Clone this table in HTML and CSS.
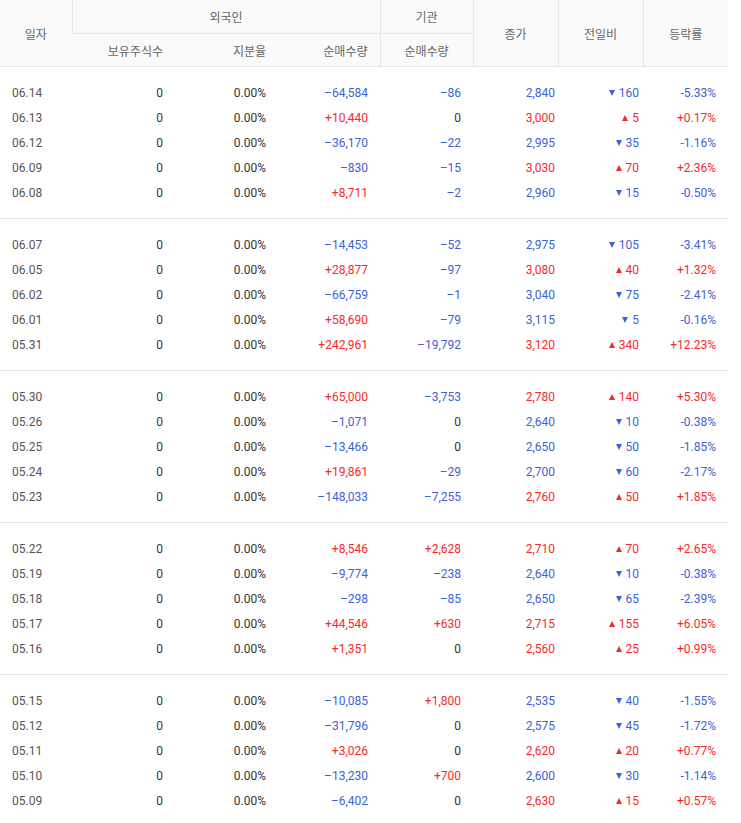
FILE: index.html
```html
<!DOCTYPE html>
<html lang="ko">
<head>
<meta charset="utf-8">
<link rel="stylesheet" href="styles.css">
</head>
<body>
<table class="tbl">
  <colgroup>
    <col class="c-date"><col class="c-hold"><col class="c-ratio"><col class="c-fnet"><col class="c-inet"><col class="c-close"><col class="c-chg"><col class="c-rate">
  </colgroup>
  <thead>
    <tr class="h1">
      <th rowspan="2" class="bl-none">일자</th>
      <th colspan="3">외국인</th>
      <th>기관</th>
      <th rowspan="2">종가</th>
      <th rowspan="2">전일비</th>
      <th rowspan="2">등락률</th>
    </tr>
    <tr class="h2">
      <th class="r">보유주식수</th>
      <th class="r bl-none">지분율</th>
      <th class="r bl-none">순매수량</th>
      <th>순매수량</th>
    </tr>
  </thead>
  <tbody>
    <tr><td class="d">06.14</td><td>0</td><td>0.00%</td><td class="dn">–64,584</td><td class="dn">–86</td><td class="dn cl">2,840</td><td class="dn cg"><i class="down"></i>160</td><td class="dn">-5.33%</td></tr>
    <tr><td class="d">06.13</td><td>0</td><td>0.00%</td><td class="up">+10,440</td><td>0</td><td class="up cl">3,000</td><td class="up cg"><i class="upa"></i>5</td><td class="up">+0.17%</td></tr>
    <tr><td class="d">06.12</td><td>0</td><td>0.00%</td><td class="dn">–36,170</td><td class="dn">–22</td><td class="dn cl">2,995</td><td class="dn cg"><i class="down"></i>35</td><td class="dn">-1.16%</td></tr>
    <tr><td class="d">06.09</td><td>0</td><td>0.00%</td><td class="dn">–830</td><td class="dn">–15</td><td class="up cl">3,030</td><td class="up cg"><i class="upa"></i>70</td><td class="up">+2.36%</td></tr>
    <tr><td class="d">06.08</td><td>0</td><td>0.00%</td><td class="up">+8,711</td><td class="dn">–2</td><td class="dn cl">2,960</td><td class="dn cg"><i class="down"></i>15</td><td class="dn">-0.50%</td></tr>
  </tbody>
  <tbody>
    <tr><td class="d">06.07</td><td>0</td><td>0.00%</td><td class="dn">–14,453</td><td class="dn">–52</td><td class="dn cl">2,975</td><td class="dn cg"><i class="down"></i>105</td><td class="dn">-3.41%</td></tr>
    <tr><td class="d">06.05</td><td>0</td><td>0.00%</td><td class="up">+28,877</td><td class="dn">–97</td><td class="up cl">3,080</td><td class="up cg"><i class="upa"></i>40</td><td class="up">+1.32%</td></tr>
    <tr><td class="d">06.02</td><td>0</td><td>0.00%</td><td class="dn">–66,759</td><td class="dn">–1</td><td class="dn cl">3,040</td><td class="dn cg"><i class="down"></i>75</td><td class="dn">-2.41%</td></tr>
    <tr><td class="d">06.01</td><td>0</td><td>0.00%</td><td class="up">+58,690</td><td class="dn">–79</td><td class="dn cl">3,115</td><td class="dn cg"><i class="down"></i>5</td><td class="dn">-0.16%</td></tr>
    <tr><td class="d">05.31</td><td>0</td><td>0.00%</td><td class="up">+242,961</td><td class="dn">–19,792</td><td class="up cl">3,120</td><td class="up cg"><i class="upa"></i>340</td><td class="up">+12.23%</td></tr>
  </tbody>
  <tbody>
    <tr><td class="d">05.30</td><td>0</td><td>0.00%</td><td class="up">+65,000</td><td class="dn">–3,753</td><td class="up cl">2,780</td><td class="up cg"><i class="upa"></i>140</td><td class="up">+5.30%</td></tr>
    <tr><td class="d">05.26</td><td>0</td><td>0.00%</td><td class="dn">–1,071</td><td>0</td><td class="dn cl">2,640</td><td class="dn cg"><i class="down"></i>10</td><td class="dn">-0.38%</td></tr>
    <tr><td class="d">05.25</td><td>0</td><td>0.00%</td><td class="dn">–13,466</td><td>0</td><td class="dn cl">2,650</td><td class="dn cg"><i class="down"></i>50</td><td class="dn">-1.85%</td></tr>
    <tr><td class="d">05.24</td><td>0</td><td>0.00%</td><td class="up">+19,861</td><td class="dn">–29</td><td class="dn cl">2,700</td><td class="dn cg"><i class="down"></i>60</td><td class="dn">-2.17%</td></tr>
    <tr><td class="d">05.23</td><td>0</td><td>0.00%</td><td class="dn">–148,033</td><td class="dn">–7,255</td><td class="up cl">2,760</td><td class="up cg"><i class="upa"></i>50</td><td class="up">+1.85%</td></tr>
  </tbody>
  <tbody>
    <tr><td class="d">05.22</td><td>0</td><td>0.00%</td><td class="up">+8,546</td><td class="up">+2,628</td><td class="up cl">2,710</td><td class="up cg"><i class="upa"></i>70</td><td class="up">+2.65%</td></tr>
    <tr><td class="d">05.19</td><td>0</td><td>0.00%</td><td class="dn">–9,774</td><td class="dn">–238</td><td class="dn cl">2,640</td><td class="dn cg"><i class="down"></i>10</td><td class="dn">-0.38%</td></tr>
    <tr><td class="d">05.18</td><td>0</td><td>0.00%</td><td class="dn">–298</td><td class="dn">–85</td><td class="dn cl">2,650</td><td class="dn cg"><i class="down"></i>65</td><td class="dn">-2.39%</td></tr>
    <tr><td class="d">05.17</td><td>0</td><td>0.00%</td><td class="up">+44,546</td><td class="up">+630</td><td class="up cl">2,715</td><td class="up cg"><i class="upa"></i>155</td><td class="up">+6.05%</td></tr>
    <tr><td class="d">05.16</td><td>0</td><td>0.00%</td><td class="up">+1,351</td><td>0</td><td class="up cl">2,560</td><td class="up cg"><i class="upa"></i>25</td><td class="up">+0.99%</td></tr>
  </tbody>
  <tbody class="last">
    <tr><td class="d">05.15</td><td>0</td><td>0.00%</td><td class="dn">–10,085</td><td class="up">+1,800</td><td class="dn cl">2,535</td><td class="dn cg"><i class="down"></i>40</td><td class="dn">-1.55%</td></tr>
    <tr><td class="d">05.12</td><td>0</td><td>0.00%</td><td class="dn">–31,796</td><td>0</td><td class="dn cl">2,575</td><td class="dn cg"><i class="down"></i>45</td><td class="dn">-1.72%</td></tr>
    <tr><td class="d">05.11</td><td>0</td><td>0.00%</td><td class="up">+3,026</td><td>0</td><td class="up cl">2,620</td><td class="up cg"><i class="upa"></i>20</td><td class="up">+0.77%</td></tr>
    <tr><td class="d">05.10</td><td>0</td><td>0.00%</td><td class="dn">–13,230</td><td class="up">+700</td><td class="dn cl">2,600</td><td class="dn cg"><i class="down"></i>30</td><td class="dn">-1.14%</td></tr>
    <tr><td class="d">05.09</td><td>0</td><td>0.00%</td><td class="dn">–6,402</td><td>0</td><td class="up cl">2,630</td><td class="up cg"><i class="upa"></i>15</td><td class="up">+0.57%</td></tr>
  </tbody>
</table>
</body>
</html>
```

FILE: styles.css
```css
html, body {
  margin: 0;
  padding: 0;
  background: #fff;
}
body {
  font-family: Roboto, "Noto Sans CJK KR", sans-serif;
  font-size: 12px;
  color: #333;
}
.tbl {
  width: 728px;
  border-collapse: collapse;
  table-layout: fixed;
}
.c-date { width: 72px; }
.c-hold { width: 103px; }
.c-ratio { width: 103px; }
.c-fnet { width: 102px; }
.c-inet { width: 93px; }
.c-close { width: 85px; }
.c-chg { width: 85px; }
.c-rate { width: 85px; }

thead th {
  background: #fafafa;
  font-weight: normal;
  color: #666;
  font-family: "Noto Sans CJK KR", Roboto, sans-serif;
  font-size: 12px;
  height: 32px;
  padding: 0;
  text-align: center;
  border-left: 1px solid #e6e6e6;
  border-bottom: 1px solid #e6e6e6;
}
thead .h1 th { height: 33px; }
thead th.bl-none { border-left: none; }
thead th.r {
  text-align: right;
  padding-right: 12px;
}
thead .h2 th.r:first-child { border-left: none; }
thead .h1 th:first-child { border-left: none; }
thead .h1 th:nth-child(2) { border-left: 1px solid #e6e6e6; }

tbody td {
  height: 25px;
  padding: 0 12px 0 0;
  text-align: right;
  white-space: nowrap;
  color: #333;
}
tbody td.d {
  text-align: left;
  padding: 0 0 0 12px;
  color: #555;
}
tbody td.cl { padding-right: 3px; }
tbody td.cg { padding-right: 4px; }
tbody tr:first-child td { padding-top: 13px; }
tbody tr:last-child td { padding-bottom: 13px; }
tbody { border-bottom: 1px solid #e6e6e6; }
tbody.last { border-bottom: none; }

tbody td.up { color: #f42a2a; }
tbody td.dn { color: #3c62d6; }

.down, .upa {
  display: inline-block;
  width: 0;
  height: 0;
  margin-right: 4px;
  vertical-align: 1px;
  border-left: 3.5px solid transparent;
  border-right: 3.5px solid transparent;
}
.down { border-top: 6px solid #3c62d6; }
.upa { border-bottom: 6px solid #f42a2a; }
```
